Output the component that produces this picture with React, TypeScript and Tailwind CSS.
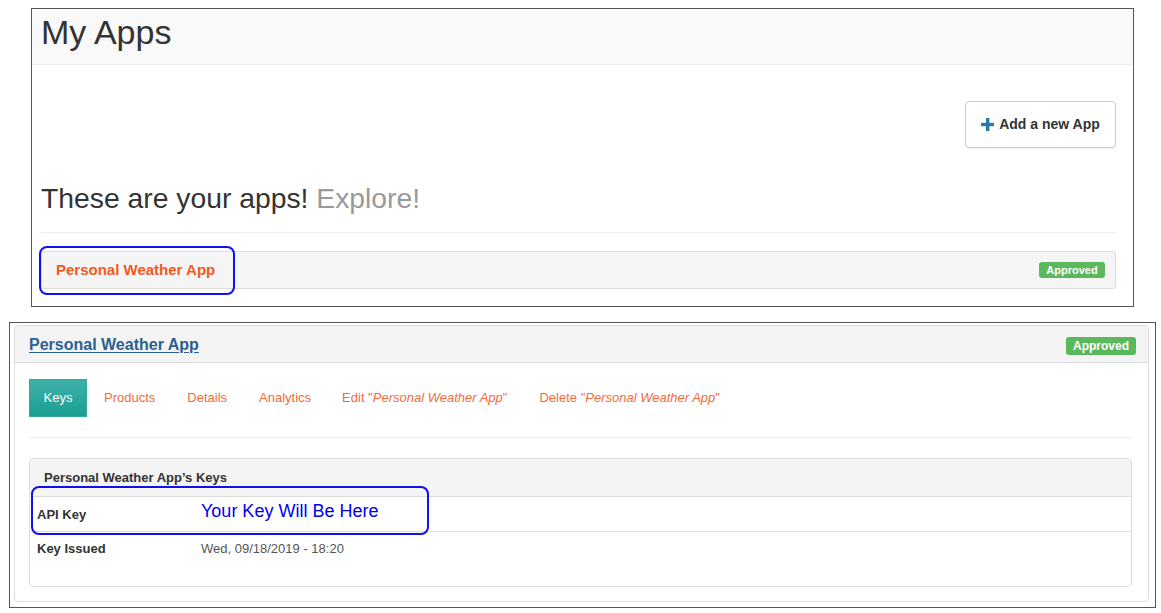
import React from "react";

const Badge = ({ cls }: { cls: string }) => (
  <span className={`inline-flex items-center justify-center rounded-[3px] bg-[#5cb85c] text-white font-bold text-[11px] leading-none ${cls}`}>
    Approved
  </span>
);

export default function App() {
  return (
    <div className="relative w-[1161px] h-[613px] bg-white overflow-hidden" style={{ fontFamily: '"Liberation Sans", Arial, sans-serif' }}>
      {/* Top box */}
      <div className="ml-[31px] mt-[8px] w-[1103px] h-[299px] border border-[#555] flex flex-col">
        <div className="h-[56px] bg-[#f9f9f9] border-b border-[#ececec] pl-[9px] flex items-center">
          <h1 className="text-[34px] leading-none text-[#333] -mt-[10px]">My Apps</h1>
        </div>
        <div className="pl-[9px] pr-[17px] flex flex-col">
          <div className="flex justify-end mt-[36px]">
            <button className="h-[47px] w-[151px] rounded-[4px] border border-[#ccc] bg-white flex items-center justify-center gap-[5px] text-[14px] font-bold text-[#333] shadow-[0_1px_1px_rgba(0,0,0,0.05)]">
              <svg width="13" height="13" viewBox="0 0 13 13">
                <rect x="5" y="0" width="3.4" height="13" fill="#2a79a8" />
                <rect x="0" y="4.8" width="13" height="3.4" fill="#2a79a8" />
              </svg>
              Add a new App
            </button>
          </div>
          <div className="mt-[34px] text-[28.3px] leading-[32px] text-[#333]">
            These are your apps! <span className="text-[#999]">Explore!</span>
          </div>
          <div className="mt-[18px] border-t border-[#eee]" />
          <div className="mt-[18px] h-[38px] bg-[#f5f5f5] border border-[#ddd] rounded-[3px] flex items-center justify-between pl-[14px] pr-[10px]">
            <span className="text-[15px] font-bold text-[#f15a24]">Personal Weather App</span>
            <Badge cls="w-[66px] h-[16px]" />
          </div>
        </div>
      </div>

      {/* Bottom box */}
      <div className="ml-[9px] mt-[15px] w-[1147px] h-[286px] border border-[#555] pt-[2px] pl-[4px] pr-[6px]">
        <div className="h-[277px] border border-[#ddd] rounded-[4px] flex flex-col">
          <div className="h-[37px] bg-[#f4f4f4] border-b border-[#ddd] rounded-t-[4px] flex items-center justify-between pl-[14px] pr-[12px]">
            <a className="text-[16px] font-bold text-[#2b5f91] underline underline-offset-[2px] mt-[2px]">Personal Weather App</a>
            <Badge cls="w-[70px] h-[18px] text-[12px] mt-[3px]" />
          </div>
          <div className="pl-[14px] pr-[16px] flex flex-col">
            <div className="mt-[16px] flex items-center text-[13px]">
              <span className="h-[38px] w-[58px] flex items-center justify-center text-white bg-gradient-to-b from-[#3cb1a8] to-[#1a9e93] border border-[#33aaa0]">Keys</span>
              <span className="ml-[17px] text-[#f26b3a]">Products</span>
              <span className="ml-[32px] text-[#f26b3a]">Details</span>
              <span className="ml-[32px] text-[#f26b3a]">Analytics</span>
              <span className="ml-[31px] text-[#f26b3a]">Edit "<i>Personal Weather App</i>"</span>
              <span className="ml-[32px] text-[#f26b3a]">Delete "<i>Personal Weather App</i>"</span>
            </div>
            <div className="mt-[20px] border-t border-[#eee]" />
            <div className="mt-[20px] h-[129px] border border-[#ddd] rounded-[4px] flex flex-col">
              <div className="h-[38px] bg-[#f4f4f4] border-b border-[#ddd] rounded-t-[4px] flex items-center pl-[14px]">
                <span className="text-[13px] font-bold text-[#333]">Personal Weather App’s Keys</span>
              </div>
              <div className="h-[35px] border-b border-[#ddd] flex items-center pl-[7px]">
                <span className="w-[164px] text-[13px] font-bold text-[#333] mt-[2px]">API Key</span>
                <span className="text-[18px] text-[#0000ee] -mt-[6px]">Your Key Will Be Here</span>
              </div>
              <div className="h-[34px] flex items-center pl-[7px]">
                <span className="w-[164px] text-[13px] font-bold text-[#333]">Key Issued</span>
                <span className="text-[13px] text-[#555]">Wed, 09/18/2019 - 18:20</span>
              </div>
            </div>
          </div>
        </div>
      </div>

      {/* Annotation overlays */}
      <div className="absolute left-[39px] top-[246px] w-[196px] h-[49px] border-[2.5px] border-[#1010f0] rounded-[8px]" />
      <div className="absolute left-[31px] top-[486px] w-[398px] h-[49px] border-[2.5px] border-[#1010f0] rounded-[8px]" />
    </div>
  );
}
